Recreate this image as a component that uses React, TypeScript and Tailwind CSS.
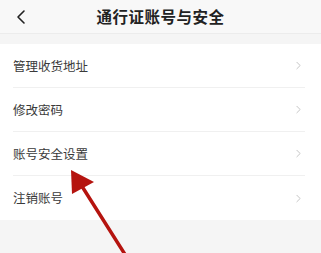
import { ChevronLeft, ChevronRight } from "lucide-react";

const ITEMS = ["管理收货地址", "修改密码", "账号安全设置", "注销账号"];

export default function App() {
  return (
    <div
      className="relative w-[321px] h-[253px] overflow-hidden bg-[#f5f5f5]"
      style={{ fontFamily: '"Noto Sans CJK SC", "Noto Sans", sans-serif' }}
    >
      {/* Header */}
      <div className="relative h-[34px] flex items-center justify-center bg-[#f8f8f8] border-b border-[#ececec]">
        <ChevronLeft className="absolute left-[9px] top-[5px] w-[24px] h-[24px] text-[#222]" strokeWidth={1.6} />
        <span className="text-[15.5px] font-semibold text-[#222] tracking-[0.5px]">通行证账号与安全</span>
      </div>

      {/* List */}
      <div className="mt-[10px] bg-white">
        {ITEMS.map((label, i) => (
          <div key={label} className="pl-[13px] pr-[16px]">
            <div
              className={
                "h-[44px] flex items-center justify-between" +
                (i < ITEMS.length - 1 ? " border-b border-[#f0f0f0]" : "")
              }
            >
              <span className="text-[12.5px] text-[#3a3a3a] pt-[1px]">{label}</span>
              <ChevronRight className="w-[13px] h-[13px] text-[#c4c4c4]" strokeWidth={1.8} />
            </div>
          </div>
        ))}
      </div>

      {/* Annotation arrow */}
      <svg className="absolute left-0 top-0 pointer-events-none" width="321" height="253" viewBox="0 0 321 253">
        <line x1="126" y1="256" x2="78" y2="180" stroke="#b5140f" strokeWidth="3.5" strokeLinecap="round" />
        <polygon points="71,170 72,194 94,182" fill="#b5140f" />
      </svg>
    </div>
  );
}
